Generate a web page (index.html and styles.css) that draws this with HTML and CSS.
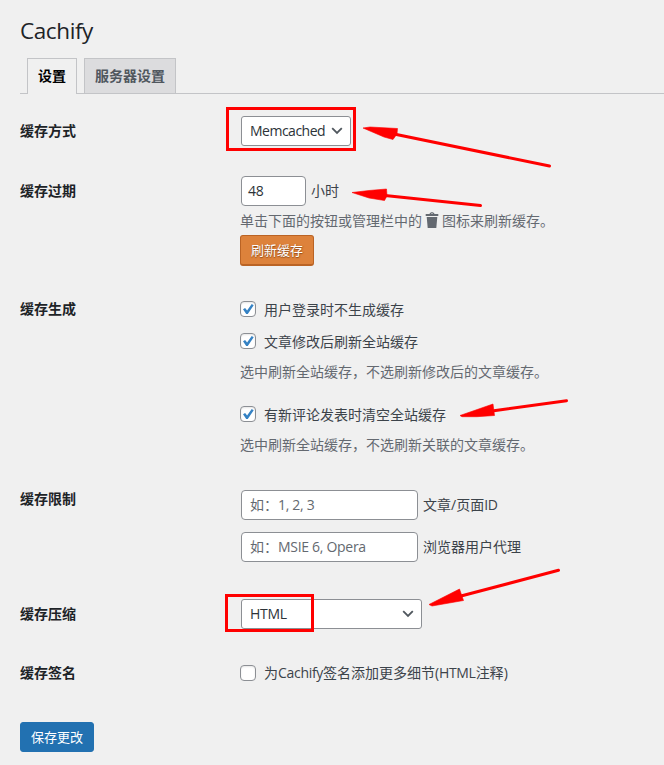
FILE: index.html
```
<!DOCTYPE html>
<html lang="zh-CN">
<head>
<meta charset="utf-8">
<title>Cachify</title>
<link rel="stylesheet" href="styles.css">
</head>
<body>
<main class="wrap">
  <h1>Cachify</h1>
  <nav class="tabs">
    <a class="tab active">设置</a>
    <a class="tab">服务器设置</a>
  </nav>
  <form class="form">
    <section class="row r-method">
      <div class="th">缓存方式</div>
      <div class="td">
        <div class="select small"><span class="lat tight">Memcached</span><svg class="chev" viewBox="0 0 12 8"><path d="M1.2 1.2 6 6 10.8 1.2"/></svg></div>
      </div>
    </section>
    <section class="row r-expire">
      <div class="th">缓存过期</div>
      <div class="td">
        <div class="field"><div class="input num lat">48</div><span>小时</span></div>
        <div class="desc">单击下面的按钮或管理栏中的<svg class="trash" viewBox="0 0 14 16"><path d="M4.500 2C5-.3 9-.3 9.500 2H13.300V4H.7V2ZM5.800 2H8.200Q7 .5 5.800 2ZM1.700 5H12.300L11.300 16H2.700Z"/></svg>图标来刷新缓存。</div>
        <button type="button" class="btn flush">刷新缓存</button>
      </div>
    </section>
    <section class="row r-create">
      <div class="th">缓存生成</div>
      <div class="td">
        <div class="check"><i class="box"><svg viewBox="0 0 16 16"><path d="M3 8.200 5.100 6.900 7.100 9.500 11.700 3 13.700 4.200 7.800 12.900H6.200Z"/></svg></i><span>用户登录时不生成缓存</span></div>
        <div class="check second"><i class="box"><svg viewBox="0 0 16 16"><path d="M3 8.200 5.100 6.900 7.100 9.500 11.700 3 13.700 4.200 7.800 12.900H6.200Z"/></svg></i><span>文章修改后刷新全站缓存</span></div>
        <div class="desc note">选中刷新全站缓存，不选刷新修改后的文章缓存。</div>
        <div class="check third"><i class="box"><svg viewBox="0 0 16 16"><path d="M3 8.200 5.100 6.900 7.100 9.500 11.700 3 13.700 4.200 7.800 12.900H6.200Z"/></svg></i><span>有新评论发表时清空全站缓存</span></div>
        <div class="desc note">选中刷新全站缓存，不选刷新关联的文章缓存。</div>
      </div>
    </section>
    <section class="row r-limit">
      <div class="th">缓存限制</div>
      <div class="td">
        <div class="field"><div class="input text">如：<span class="lat">1, 2, 3</span></div><span>文章/页面<span class="lat">ID</span></span></div>
        <div class="field"><div class="input text">如：<span class="lat">MSIE 6, Opera</span></div><span>浏览器用户代理</span></div>
      </div>
    </section>
    <section class="row r-minify">
      <div class="th">缓存压缩</div>
      <div class="td">
        <div class="select large"><span class="lat">HTML</span><svg class="chev" viewBox="0 0 12 8"><path d="M1.2 1.2 6 6 10.8 1.2"/></svg></div>
      </div>
    </section>
    <section class="row r-sign">
      <div class="th">缓存签名</div>
      <div class="td">
        <div class="check"><i class="box"></i><span>为<span class="lat">Cachify</span>签名添加更多细节<span class="lat">(HTML</span>注释<span class="lat">)</span></span></div>
      </div>
    </section>
    <button type="button" class="btn save">保存更改</button>
  </form>
</main>
<svg class="marks" viewBox="0 0 664 765">
  <rect x="227.500" y="108.500" width="127" height="41"/>
  <rect x="226.500" y="595.500" width="86" height="35"/>
  <path class="shaft" d="M394 134 549.500 166M385 195.500 480.500 205.500M492 411 566.500 400.700M461 596 558.500 570.300"/>
  <path class="head" d="M363 128 370 127 397.500 128.500 397 134 393 139.500 384 137ZM352 192.500 369 190.500 386.500 189 387 196 384.500 200.500 369 198ZM460 415.500 493 404 494.500 415.500 477 416.700 462 416.700ZM429 604.500 459.500 589 463.500 600.500 432 606Z"/>
</svg>
</body>
</html>
```
FILE: styles.css
```
* { box-sizing: border-box; }
body {
  margin: 0;
  height: 765px;
  overflow: hidden;
  position: relative;
  background: #f0f0f0;
  color: #3c434a;
  font: 14px/20px "Open Sans", "Noto Sans CJK SC", sans-serif;
}
.wrap { padding-left: 20px; }
h1 {
  margin: 0;
  padding-top: 16px;
  height: 58px;
  font-size: 22.5px;
  line-height: 30px;
  font-weight: 400;
  letter-spacing: -.4px;
  color: #1d2327;
}
.tabs {
  display: flex;
  gap: 7px;
  height: 36px;
  padding-left: 7px;
  border-bottom: 1px solid #c3c4c7;
}
.tab {
  height: 35px;
  padding: 0 10px;
  border: 1px solid #c3c4c7;
  border-bottom: 0;
  background: #dcdcde;
  color: #50575e;
  font-weight: 700;
  line-height: 34px;
}
.tab.active { height: 36px; background: #f0f0f0; color: #000; }
.form { padding-top: 7px; }
.row { display: grid; grid-template-columns: 220px 1fr; }
.th { padding-top: 15px; line-height: 30px; font-weight: 700; color: #1d2327; }
.td { padding-top: 15px; }
.r-method { height: 60px; }
.r-expire { height: 118px; }
.r-create { height: 190px; }
.r-limit { height: 115px; }
.r-minify { height: 59px; }
.r-sign { height: 79px; }
.lat { letter-spacing: -.3px; }
.tight { letter-spacing: -.5px; }
.select, .input {
  height: 30px;
  margin-left: 1px;
  border: 1px solid #8c8f94;
  border-radius: 4px;
  background: #fff;
  line-height: 28px;
}
.select {
  display: flex;
  align-items: center;
  justify-content: space-between;
  padding: 0 7px 0 8px;
  border-radius: 3px;
  color: #2c3338;
}
.small { width: 110px; }
.large { width: 181px; }
.chev { width: 12px; height: 8px; fill: none; stroke: #50575e; stroke-width: 1.8; }
.field { display: flex; align-items: center; gap: 5px; height: 30px; }
.num { width: 65px; padding-left: 6px; color: #2c3338; }
.text { width: 177px; padding-left: 8px; color: #646970; }
.r-limit .td { display: flex; flex-direction: column; gap: 12px; padding-top: 21px; }
.desc { color: #646970; white-space: nowrap; }
.r-expire .desc { display: flex; align-items: center; height: 20px; margin-top: 5px; }
.trash { width: 14px; height: 16px; margin: -2px 3px 0; fill: #646970; }
.btn {
  display: block;
  width: 74px;
  height: 30px;
  padding: 0;
  border: 1px solid #2271b1;
  border-radius: 3px;
  background: #2271b1;
  color: #fff;
  font: 13px/28px "Open Sans", "Noto Sans CJK SC", sans-serif;
  text-align: center;
}
.flush {
  height: 31px;
  margin-top: 4px;
  border-color: #ba6324;
  border-bottom-width: 2px;
  background: #dd823b;
  text-shadow: 0 1px 1px #914c1b, 1px 0 1px #b86326;
}
.check { display: flex; align-items: center; gap: 8px; height: 30px; white-space: nowrap; }
.check span { line-height: 20px; }
.r-create .check > span { padding-top: 1px; }
.box {
  display: block;
  width: 16px;
  height: 16px;
  border: 1px solid #8c8f94;
  border-radius: 4px;
  background: #fff;
  box-shadow: inset 0 1px 2px #0000001a;
}
.box svg { display: block; width: 16px; height: 16px; margin: -1px; fill: #3582c4; }
.second { margin-top: 2px; }
.note { margin-top: 6px; }
.third { margin-top: 17px; }
.marks { position: absolute; inset: 0; width: 664px; height: 765px; pointer-events: none; }
.marks rect, .shaft { fill: none; stroke: #f00; stroke-width: 3; }
.shaft { stroke-linecap: round; }
.head { fill: #f00; stroke: #f00; stroke-width: .6; }
```
